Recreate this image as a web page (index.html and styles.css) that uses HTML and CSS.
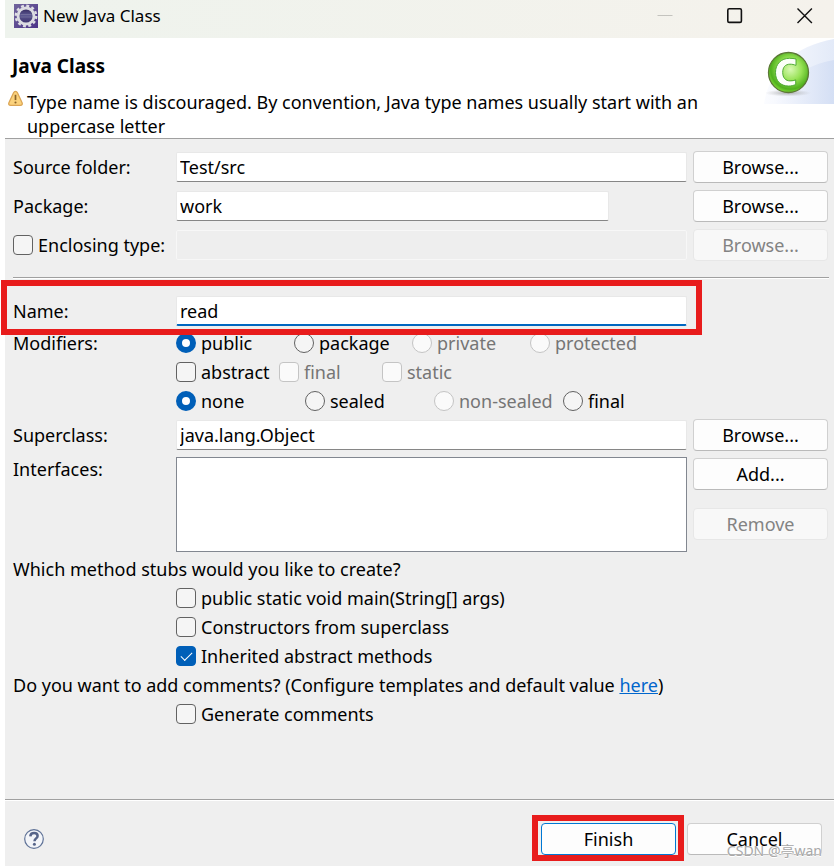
FILE: index.html
```html
<!DOCTYPE html>
<html lang="en">
<head>
<meta charset="utf-8">
<title>New Java Class</title>
<link rel="stylesheet" href="styles.css">
</head>
<body>
<div class="dialog">
  <div class="titlebar">
    <svg class="app-icon" viewBox="0 0 24 24" aria-hidden="true">
      <defs>
        <linearGradient id="violet" x1="0" y1="0" x2="1" y2="1"><stop offset="0" stop-color="#71659c"/><stop offset="1" stop-color="#4c3489"/></linearGradient>
        <linearGradient id="orb" x1="0" y1="0" x2="0" y2="1"><stop offset="0" stop-color="#2f2358"/><stop offset=".45" stop-color="#5b5790"/><stop offset="1" stop-color="#392d69"/></linearGradient>
      </defs>
      <rect width="24" height="24" fill="url(#violet)"/>
      <circle cx="12" cy="12" r="10.2" fill="none" stroke="#dedee4" stroke-width="2.4" stroke-dasharray="2.9 2.44"/>
      <circle cx="12" cy="12" r="8" fill="url(#orb)" stroke="#dcdce2" stroke-width="2.8"/>
      <path d="M6.500 10.500h11M6.500 13h11" stroke="#77739f" stroke-width=".8"/>
    </svg>
    <span class="caption">New Java Class</span>
    <div class="window-buttons">
      <button type="button" aria-label="Minimize" disabled><svg viewBox="0 0 16 16"><path d="M.5 7.500h15" stroke="#c4c3be"/></svg></button>
      <button type="button" aria-label="Maximize"><svg viewBox="0 0 16 16"><rect x=".8" y=".8" width="13.600" height="13.600" rx="1.400" fill="none" stroke="#111" stroke-width="1.600"/></svg></button>
      <button type="button" aria-label="Close"><svg viewBox="0 0 16 16"><path d="M.5.5l14.400 14.400M14.900.5L.5 14.900" stroke="#111" stroke-width="1.400"/></svg></button>
    </div>
  </div>

  <header class="banner">
    <div class="banner-text">
      <h1>Java Class</h1>
      <div class="message">
        <svg viewBox="0 0 14 16" aria-hidden="true">
          <path d="M7 1.200c.9 0 1.400.5 1.800 1.400l4.300 9.200c.7 1.700.1 2.700-1.600 2.700h-9C.8 14.500.2 13.500.9 11.800l4.300-9.200C5.600 1.700 6.100 1.200 7 1.200z" fill="#fbd27c" stroke="#dba555" stroke-width="1.200"/>
          <path d="M7 4.500v5" stroke="#8a6228" stroke-width="1.600"/><circle cx="7" cy="11.800" r="1" fill="#8a6228"/>
        </svg>
        <p>Type name is discouraged. By convention, Java type names usually start with an uppercase letter</p>
      </div>
    </div>
    <svg class="banner-art" viewBox="0 0 70 66" aria-hidden="true">
      <defs>
        <linearGradient id="sky" x1="0" x2="1"><stop offset="0" stop-color="#fbfcff"/><stop offset="1" stop-color="#e3eaf8"/></linearGradient>
        <linearGradient id="sky2" x1="0" x2="1"><stop offset="0" stop-color="#f6f8fe"/><stop offset="1" stop-color="#cfdbf3"/></linearGradient>
        <radialGradient id="green" cx=".55" cy=".42" r=".62"><stop offset="0" stop-color="#d9f9b4"/><stop offset=".45" stop-color="#97e255"/><stop offset=".8" stop-color="#4fb01d"/><stop offset="1" stop-color="#8eea3c"/></radialGradient>
        <radialGradient id="shade"><stop offset="0" stop-color="#909090" stop-opacity=".7"/><stop offset="1" stop-color="#aaa" stop-opacity="0"/></radialGradient>
      </defs>
      <path d="M0 66C5 32 30 8 70 1v65z" fill="url(#sky)"/>
      <path d="M12 66C20 42 42 27 70 22v44z" fill="url(#sky2)" opacity=".75"/>
      <ellipse cx="24" cy="55" rx="23" ry="3.500" fill="url(#shade)"/>
      <circle cx="24.500" cy="34.500" r="20" fill="url(#green)" stroke="#5c7737" stroke-width="1.300"/>
      <path d="M32 21v6.400c-2-.9-4-1.200-6-1.200-4.700 0-7.300 3-7.300 8.200 0 5.300 2.800 8.500 7.500 8.500 2 0 4-.3 5.500-1v4.600c-2.200 1-4.600 1.500-7.200 1.500-7.800 0-13-5-13-13.500 0-8.400 5.700-14.200 14-14.200 2.500 0 4.700.3 6.500.7z" fill="#fbfff8" stroke="#43a329" stroke-width=".9"/>
    </svg>
  </header>

  <main>
    <div class="row">
      <label for="folder">Source folder:</label>
      <input class="field" id="folder" type="text" value="Test/src">
      <button class="btn" type="button">Browse...</button>
    </div>
    <div class="row">
      <label for="package">Package:</label>
      <input class="field field-short" id="package" type="text" value="work">
      <button class="btn" type="button">Browse...</button>
    </div>
    <div class="row">
      <label class="choice"><input type="checkbox">Enclosing type:</label>
      <input class="field" type="text" aria-label="Enclosing type" disabled>
      <button class="btn" type="button" disabled>Browse...</button>
    </div>
    <hr>
    <div class="row row-name">
      <label for="name">Name:</label>
      <input class="field field-active" id="name" type="text" value="read">
      <span class="mark mark-name"></span>
    </div>
    <div class="row row-modifiers">
      <span class="line">Modifiers:</span>
      <div class="modifiers">
        <div class="choices access">
          <label class="choice"><input type="radio" name="access" checked>public</label>
          <label class="choice"><input type="radio" name="access">package</label>
          <label class="choice"><input type="radio" name="access" disabled>private</label>
          <label class="choice"><input type="radio" name="access" disabled>protected</label>
        </div>
        <div class="choices flags">
          <label class="choice"><input type="checkbox">abstract</label>
          <label class="choice"><input type="checkbox" disabled>final</label>
          <label class="choice"><input type="checkbox" disabled>static</label>
        </div>
        <div class="choices sealing">
          <label class="choice"><input type="radio" name="sealing" checked>none</label>
          <label class="choice"><input type="radio" name="sealing">sealed</label>
          <label class="choice"><input type="radio" name="sealing" disabled>non-sealed</label>
          <label class="choice"><input type="radio" name="sealing">final</label>
        </div>
      </div>
    </div>
    <div class="row">
      <label for="superclass">Superclass:</label>
      <input class="field" id="superclass" type="text" value="java.lang.Object">
      <button class="btn" type="button">Browse...</button>
    </div>
    <div class="row row-interfaces">
      <label for="interfaces">Interfaces:</label>
      <select class="list" id="interfaces" size="3"></select>
      <div class="stack">
        <button class="btn" type="button">Add...</button>
        <button class="btn" type="button" disabled>Remove</button>
      </div>
    </div>
    <p class="line">Which method stubs would you like to create?</p>
    <div class="options">
      <label class="choice"><input type="checkbox">public static void main(String[] args)</label>
      <label class="choice"><input type="checkbox">Constructors from superclass</label>
      <label class="choice"><input type="checkbox" checked>Inherited abstract methods</label>
    </div>
    <p class="line">Do you want to add comments? (Configure templates and default value <a href="#">here</a>)</p>
    <div class="options">
      <label class="choice"><input type="checkbox">Generate comments</label>
    </div>
  </main>

  <footer>
    <button class="help" type="button" aria-label="Help">
      <svg viewBox="0 0 20 20"><circle cx="10" cy="10" r="9.300" fill="#f3f5f9" stroke="#5f7297" stroke-width="1.200"/><path d="M6.300 7.400C6.500 5.200 8 4.100 10.100 4.100c2.100 0 3.500 1.100 3.500 2.900 0 2.400-3.100 2.400-3.100 5.200" fill="none" stroke="#566489" stroke-width="2.500"/><circle cx="10.400" cy="15.200" r="1.500" fill="#566489"/></svg>
    </button>
    <div class="finish">
      <button class="btn btn-default" type="submit">Finish</button>
      <span class="mark mark-finish"></span>
    </div>
    <button class="btn" type="button">Cancel</button>
    <span class="watermark">CSDN @亭wan</span>
  </footer>
</div>
</body>
</html>
```
FILE: styles.css
```css
* { box-sizing: border-box; }

body {
  margin: 0;
  padding-left: 5px;
  background: #fff;
  color: #000;
  font: 18px/24px "Noto Sans", "Noto Sans CJK SC", sans-serif;
}

h1, p { margin: 0; }

button, input, select { font: inherit; color: inherit; }

.dialog {
  display: flex;
  flex-direction: column;
  min-height: 100vh;
  background: #efefef;
}

.titlebar {
  display: flex;
  align-items: center;
  height: 38px;
  padding: 0 21px 6px 9px;
  background: linear-gradient(90deg, #eef3ed, #f5f2ec);
}

.app-icon { width: 24px; height: 24px; }

.caption {
  margin-left: 5px;
  font-size: 17px;
}

.window-buttons {
  display: flex;
  gap: 54px;
  margin-left: auto;
}

.window-buttons button,
.help {
  display: flex;
  padding: 0;
  border: 0;
  background: none;
}

.window-buttons svg { width: 16px; height: 16px; fill: none; }

.banner {
  display: flex;
  justify-content: space-between;
  border-bottom: 1px solid #a0a0a0;
  background: #fff;
}

.banner-text { padding: 16px 0 0 3px; }

h1 {
  padding-left: 4px;
  font-size: 19px;
  line-height: 24px;
}

.message {
  display: flex;
  gap: 4px;
  max-width: 710px;
  margin-top: 12px;
}

.message svg { flex: none; width: 15px; height: 17px; }

.banner-art { flex: none; width: 70px; height: 66px; }

main {
  flex: 1;
  padding: 12px 6px 0 8px;
}

.row {
  position: relative;
  display: grid;
  grid-template-columns: 157px 1fr 135px;
  column-gap: 6px;
  align-items: center;
  margin-bottom: 7px;
}

.field {
  width: 100%;
  min-width: 0;
  height: 30px;
  padding: 0 3px;
  border: 1px solid #e8e8e8;
  border-bottom-color: #868686;
  border-radius: 2px;
  background: #fff;
  outline: 0;
}

.field-short { width: calc(100% - 78px); }

.field:disabled {
  border-color: #f7f7f7;
  background: #eee;
}

.field-active {
  border-bottom: 2px solid #0067c0;
}

.btn {
  width: 135px;
  height: 32px;
  padding: 0;
  border: 1px solid #d0d0d0;
  border-bottom-color: #bababa;
  border-radius: 4px;
  background: #fdfdfd;
}

.btn:disabled {
  border-color: #e7e7e7;
  background: #f8f8f8;
  color: #838383;
}

.btn-default { border-color: #0078d4; }

hr {
  height: 2px;
  margin: 16px -1px 16px 0;
  border: 0;
  border-top: 1px solid #a0a0a0;
  background: #fff;
}

.row-name {
  height: 32px;
  margin-bottom: 2px;
}

.mark {
  position: absolute;
  z-index: 1;
  border: 6px solid #e81c1c;
  pointer-events: none;
}

.mark-name { inset: -15px 126px -8px -12px; }

.row-modifiers {
  align-items: start;
  margin-bottom: 3px;
}

.modifiers { grid-column: 2 / -1; }

.line { line-height: 29px; }

.choices { display: grid; }
.access { grid-template-columns: repeat(4, 118px); }
.flags { grid-template-columns: repeat(3, 103px); }
.sealing { grid-template-columns: repeat(4, 129px); }

.choice {
  display: flex;
  align-items: center;
  gap: 5px;
  padding-bottom: 1px;
  line-height: 28px;
  white-space: nowrap;
}

.choice:has(:disabled) { color: #757575; }

.choice input {
  flex: none;
  appearance: none;
  width: 20px;
  height: 20px;
  margin: 0;
  border: 1px solid #626262;
  border-radius: 4px;
  background: #f5f5f5;
}

.choice input[type="radio"] { border-radius: 50%; }

.choice input:disabled {
  border-color: #c4c4c4;
  background: #fafafa;
}

.choice input[type="radio"]:checked {
  border: 6px solid #005fb8;
  background: #fff;
}

.choice input[type="checkbox"]:checked {
  display: grid;
  place-items: center;
  border-color: #005fb8;
  background: #005fb8;
}

.choice input[type="checkbox"]:checked::after {
  content: "";
  width: 10px;
  height: 5px;
  margin-bottom: 3px;
  border: solid #fff;
  border-width: 0 0 1px 1px;
  transform: rotate(-45deg);
}

.row-interfaces {
  align-items: start;
  margin: -1px 0 3px;
}

.list {
  width: 100%;
  height: 95px;
  border: 1px solid #828790;
  border-radius: 0;
  background: #fff;
}

.stack {
  display: grid;
  gap: 18px;
  padding-top: 1px;
}

.options { padding-left: 163px; }

a { color: #0066cc; }

footer {
  position: relative;
  display: flex;
  align-items: center;
  gap: 11px;
  height: 67px;
  padding: 11px 12px 0 19px;
  border-top: 1px solid #a0a0a0;
  box-shadow: inset 0 1px #fff;
}

.help svg { width: 20px; height: 20px; }

.finish {
  position: relative;
  display: flex;
  margin-left: auto;
}

.mark-finish { inset: -8px -8px -6px -9px; }

.watermark {
  position: absolute;
  right: 12px;
  bottom: 3px;
  color: #a8a8a8;
  font-size: 14px;
  text-shadow: 0 1px #fff;
}
```
